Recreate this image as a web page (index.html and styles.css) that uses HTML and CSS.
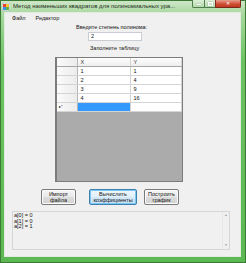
FILE: index.html
```html
<!DOCTYPE html>
<html>
	<head>
		<meta charset="UTF-8">
		<title>Метод наименьших квадратов</title>
		<link rel="stylesheet" href="styles.css">
	</head>
	<body>
		<div class="window">
			<div class="titlebar">
				<svg class="app-icon" width="8" height="8" viewBox="0 0 8 8">
					<rect x="0" y="0" width="8" height="8" fill="#f4f4f4" stroke="#7a8aa0" stroke-width="0.6"/>
					<rect x="1" y="1" width="3" height="3" fill="#e8452c"/>
					<rect x="4" y="1" width="3" height="3" fill="#f6c22e"/>
					<rect x="1" y="4" width="3" height="3" fill="#3f8fe0"/>
					<rect x="4" y="4" width="3" height="3" fill="#5cb646"/>
				</svg>
				<span class="title">Метод наименьших квадратов для полиномиальных ура...</span>
				<div class="controls">
					<span class="cbtn cmin"><i></i></span>
					<span class="cbtn cmax"><i></i></span>
					<span class="cbtn cclose">✕</span>
				</div>
			</div>
			<div class="client">
				<div class="menu">
					<span>Файл</span>
					<span>Редактор</span>
				</div>
				<div class="label l1">Введите степень полинома:</div>
				<div class="input">2</div>
				<div class="label l2">Заполните таблицу</div>
				<div class="grid">
					<table>
						<tr class="head">
							<td class="rh"></td><td>X</td><td>Y</td>
						</tr>
						<tr><td class="rh"></td><td>1</td><td>1</td></tr>
						<tr><td class="rh"></td><td>2</td><td>4</td></tr>
						<tr><td class="rh"></td><td>3</td><td>9</td></tr>
						<tr><td class="rh"></td><td>4</td><td>16</td></tr>
						<tr class="newrow"><td class="rh">▸*</td><td class="sel"></td><td></td></tr>
					</table>
				</div>
				<div class="buttons">
					<div class="btn b1">Импорт<br>файла</div>
					<div class="btn b2 focus">Вычислить<br>коэффициенты</div>
					<div class="btn b3">Построить<br>график</div>
				</div>
				<div class="output">
					<div class="lines">
						<div>a[0] = 0</div>
						<div>a[1] = 0</div>
						<div>a[2] = 1</div>
					</div>
					<div class="scroll">
						<span>▲</span>
						<span>▼</span>
					</div>
				</div>
			</div>
		</div>
	</body>
</html>
```

FILE: styles.css
```css
* {
	margin: 0;
	padding: 0;
	box-sizing: border-box;
}

body {
	font-family: "Liberation Sans", Arial, sans-serif;
	background: #5cb852;
}

.window {
	width: 246px;
	height: 263px;
	border: 1px solid #3b7a35;
	background: linear-gradient(#cfe6c9, #a9d9a0 12px, #6cc262 60px, #5cb852);
	padding: 0 4px 5px 3px;
	display: flex;
	flex-direction: column;
}

.titlebar {
	height: 11px;
	display: flex;
	align-items: flex-start;
}

.app-icon {
	margin: 2px 0 0 -2px;
	flex: none;
}

.title {
	font-size: 6px;
	line-height: 10px;
	color: #1d2b1a;
	margin-left: 3px;
	white-space: nowrap;
	overflow: hidden;
}

.controls {
	margin-left: auto;
	display: flex;
	height: 7px;
	margin-top: -1px;
}

.cbtn {
	height: 8px;
	border: 1px solid #4f7d4a;
	border-top: none;
	background: linear-gradient(#dcefd8, #b5dcae);
	display: flex;
	align-items: center;
	justify-content: center;
}

.cmin {
	width: 12px;
	border-radius: 0 0 0 2px;
	border-right: none;
}

.cmin i {
	width: 4px;
	height: 1px;
	margin-top: 2px;
	background: #fff;
	box-shadow: 0 0 1px #333;
}

.cmax {
	width: 11px;
	border-right: none;
}

.cmax i {
	width: 5px;
	height: 4px;
	border: 1px solid #fff;
	box-shadow: 0 0 1px #333;
}

.cclose {
	width: 26px;
	border-radius: 0 0 2px 0;
	border-color: #7a2a1c;
	background: linear-gradient(#e8a08e, #cc4b31 60%, #c23a20);
	color: #fff;
	font-size: 5px;
	line-height: 7px;
}

.client {
	flex: 1;
	background: #f0f0f0;
	border: 1px solid #e2ebe0;
	display: flex;
	flex-direction: column;
	align-items: flex-start;
	font-size: 5.5px;
	color: #111;
}

.menu {
	height: 9px;
	width: 100%;
	display: flex;
	align-items: center;
	padding-left: 7px;
	gap: 10px;
}

.label {
	line-height: 7px;
	white-space: nowrap;
}

.l1 {
	margin: 2px 0 0 71px;
}

.input {
	margin: 1px 0 0 83px;
	width: 54px;
	height: 9px;
	background: #fff;
	border: 1px solid #c9cdd3;
	padding-left: 2px;
	line-height: 7px;
}

.l2 {
	margin: 4px 0 0 85px;
}

.grid {
	margin: 5px 0 0 50px;
	width: 128px;
	height: 125px;
	border: 1px solid #7c7c7c;
	border-left-width: 2px;
	background: #ababab;
}

.grid table {
	border-collapse: collapse;
	table-layout: fixed;
	width: 125px;
}

.grid td {
	height: 9px;
	padding: 0 0 0 3px;
	background: #fff;
	border: 1px solid #d4d4d4;
	border-top: none;
	border-left: none;
	line-height: 8px;
	white-space: nowrap;
}

.grid td:nth-child(1) {
	width: 20px;
}

.grid td:nth-child(2) {
	width: 53px;
}

.grid .head td {
	height: 8px;
	background: linear-gradient(#fdfdfd, #eeeeee);
	border-bottom-color: #a6a6a6;
	color: #333;
}

.grid td.rh {
	background: linear-gradient(90deg, #fafafa, #ececec);
	border-right-color: #b6b6b6;
	font-size: 4px;
	padding-left: 2px;
}

.grid td.sel {
	background: #3399ff;
}

.buttons {
	margin: 7px 0 0 36px;
	display: flex;
}

.btn {
	height: 16px;
	border: 1px solid #7a7a7a;
	border-radius: 2px;
	background: linear-gradient(#f4f4f4, #e9e9e9 50%, #dcdcdc 51%, #d2d2d2);
	text-align: center;
	line-height: 5.5px;
	padding-top: 2px;
	box-shadow: inset 0 0 0 1px #fbfbfb;
}

.b1 {
	width: 35px;
}

.b2 {
	width: 48px;
	margin-left: 13px;
}

.b3 {
	width: 35px;
	margin-left: 7px;
}

.focus {
	border-color: #3c7fb1;
	background: linear-gradient(#edf6fc, #e2f0fa 50%, #d2e8f7 51%, #c6e1f5);
	box-shadow: inset 0 0 0 1px #7cc8ee;
}

.output {
	margin: 6px 0 0 7px;
	width: 218px;
	height: 39px;
	border: 1px solid #d6d6d6;
	background: #f0f0f0;
	display: flex;
}

.lines {
	flex: 1;
	padding: 1px 0 0 1px;
	line-height: 5.5px;
}

.scroll {
	width: 7px;
	display: flex;
	flex-direction: column;
	justify-content: space-between;
	align-items: center;
	font-size: 3px;
	color: #8a8a8a;
	padding: 1px 0 2px;
	border-left: 1px solid #e6e6e6;
}
```
